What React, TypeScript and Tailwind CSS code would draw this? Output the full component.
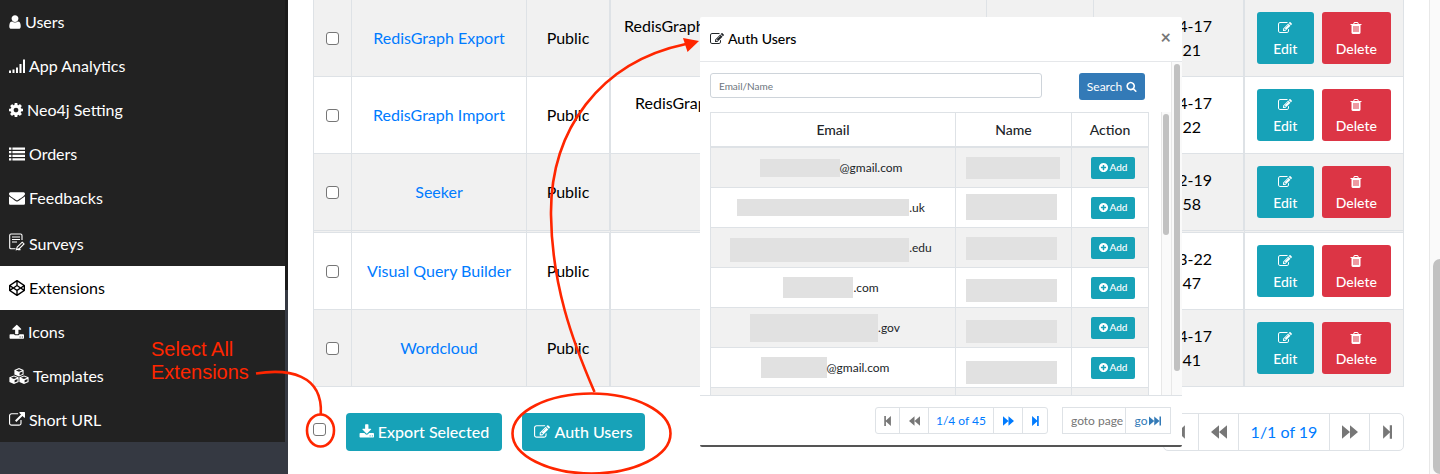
import React from "react";
import { FaCodepen } from "react-icons/fa";

const PATHS = {
  user: "M1536 1399q0 109-62.5 187t-150.5 78h-854q-88 0-150.5-78t-62.5-187q0-85 8.5-160.5t31.5-152 58.5-131 94-89 134.5-34.5q131 128 313 128t313-128q76 0 134.5 34.5t94 89 58.5 131 31.5 152 8.5 160.5zm-256-887q0 159-112.5 271.5t-271.5 112.5-271.5-112.5-112.5-271.5 112.5-271.5 271.5-112.5 271.5 112.5 112.5 271.5z",
  edit: "M888 1184l116-116-152-152-116 116v56h96v96h56zm440-720q-16-16-33 1l-350 350q-17 17-1 33t33-1l350-350q17-17 1-33zm80 594v190q0 119-84.5 203.5t-203.5 84.5h-832q-119 0-203.5-84.5t-84.5-203.5v-832q0-119 84.5-203.5t203.5-84.5h832q63 0 117 25 15 7 18 23 3 17-9 29l-49 49q-14 14-32 8-23-6-45-6h-832q-66 0-113 47t-47 113v832q0 66 47 113t113 47h832q66 0 113-47t47-113v-126q0-13 9-22l64-64q15-15 35-7t20 29zm-96-738l288 288-672 672h-288v-288zm444 132l-92 92-288-288 92-92q28-28 68-28t68 28l152 152q28 28 28 68t-28 68z",
  trash: "M704 1376v-704q0-14-9-23t-23-9h-64q-14 0-23 9t-9 23v704q0 14 9 23t23 9h64q14 0 23-9t9-23zm256 0v-704q0-14-9-23t-23-9h-64q-14 0-23 9t-9 23v704q0 14 9 23t23 9h64q14 0 23-9t9-23zm256 0v-704q0-14-9-23t-23-9h-64q-14 0-23 9t-9 23v704q0 14 9 23t23 9h64q14 0 23-9t9-23zm-544-992h448l-48-117q-7-9-17-11h-317q-10 2-17 11zm928 32v64q0 14-9 23t-23 9h-96v948q0 83-47 143.5t-113 60.5h-832q-66 0-113-58.5t-47-141.5v-952h-96q-14 0-23-9t-9-23v-64q0-14 9-23t23-9h309l70-167q15-37 54-63t79-26h320q40 0 79 26t54 63l70 167h309q14 0 23 9t9 23z",
  cog: "M1152 896q0-106-75-181t-181-75-181 75-75 181 75 181 181 75 181-75 75-181zm512-109v222q0 12-8 23t-20 13l-185 28q-19 54-39 91 35 50 107 138 10 12 10 25t-9 23q-27 37-99 108t-94 71q-12 0-26-9l-138-108q-44 23-91 38-16 136-29 186-7 28-36 28h-222q-14 0-24.5-8.5t-11.5-21.5l-28-184q-49-16-90-37l-141 107q-10 9-25 9-14 0-25-11-126-114-165-168-7-10-7-23 0-12 8-23 15-21 51-66.5t54-70.5q-27-50-41-99l-183-27q-13-2-21-12.5t-8-23.5v-222q0-12 8-23t19-13l186-28q14-46 39-92-40-57-107-138-10-12-10-24 0-10 9-23 26-36 98.5-107.5t94.5-71.5q13 0 26 10l138 107q44-23 91-38 16-136 29-186 7-28 36-28h222q14 0 24.5 8.5t11.5 21.5l28 184q49 16 90 37l142-107q9-9 24-9 13 0 25 10 129 119 165 170 7 8 7 22 0 12-8 23-15 21-51 66.5t-54 70.5q26 50 41 98l183 28q13 2 21 12.5t8 23.5z",
  download: "M1344 1344q0-26-19-45t-45-19-45 19-19 45 19 45 45 19 45-19 19-45zm256 0q0-26-19-45t-45-19-45 19-19 45 19 45 45 19 45-19 19-45zm128-224v320q0 40-28 68t-68 28h-1472q-40 0-68-28t-28-68v-320q0-40 28-68t68-28h465l135 136q58 56 136 56t136-56l136-136h464q40 0 68 28t28 68zm-325-569q17 41-14 70l-448 448q-18 19-45 19t-45-19l-448-448q-31-29-14-70 17-39 59-39h256v-448q0-26 19-45t45-19h256q26 0 45 19t19 45v448h256q42 0 59 39z",
  upload: "M1344 1472q0-26-19-45t-45-19-45 19-19 45 19 45 45 19 45-19 19-45zm256 0q0-26-19-45t-45-19-45 19-19 45 19 45 45 19 45-19 19-45zm128-224v320q0 40-28 68t-68 28h-1472q-40 0-68-28t-28-68v-320q0-40 28-68t68-28h427q21 56 70.5 92t110.5 36h256q61 0 110.5-36t70.5-92h427q40 0 68 28t28 68zm-325-648q-17 40-59 40h-256v448q0 26-19 45t-45 19h-256q-26 0-45-19t-19-45v-448h-256q-42 0-59-40-17-39 14-69l448-448q18-19 45-19t45 19l448 448q31 30 14 69z",
  link: "M1408 928v320q0 119-84.5 203.5t-203.5 84.5h-832q-119 0-203.5-84.5t-84.5-203.5v-832q0-119 84.5-203.5t203.5-84.5h704q14 0 23 9t9 23v64q0 14-9 23t-23 9h-704q-66 0-113 47t-47 113v832q0 66 47 113t113 47h832q66 0 113-47t47-113v-320q0-14 9-23t23-9h64q14 0 23 9t9 23zm384-864v512q0 26-19 45t-45 19-45-19l-176-176-652 652q-10 10-23 10t-23-10l-114-114q-10-10-10-23t10-23l652-652-176-176q-19-19-19-45t19-45 45-19h512q26 0 45 19t19 45z",
  search: "M1216 832q0-185-131.5-316.5t-316.5-131.5-316.5 131.5-131.5 316.5 131.5 316.5 316.5 131.5 316.5-131.5 131.5-316.5zm512 832q0 52-38 90t-90 38q-54 0-90-38l-343-342q-179 124-399 124-143 0-273.5-55.5t-225-150-150-225-55.5-273.5 55.5-273.5 150-225 225-150 273.5-55.5 273.5 55.5 225 150 150 225 55.5 273.5q0 220-124 399l343 343q37 37 37 90z",
  plus: "M1344 960v-128q0-26-19-45t-45-19h-256v-256q0-26-19-45t-45-19h-128q-26 0-45 19t-19 45v256h-256q-26 0-45 19t-19 45v128q0 26 19 45t45 19h256v256q0 26 19 45t45 19h128q26 0 45-19t19-45v-256h256q26 0 45-19t19-45zm320-64q0 209-103 385.5t-279.5 279.5-385.5 103-385.5-103-279.5-279.5-103-385.5 103-385.5 279.5-279.5 385.5-103 385.5 103 279.5 279.5 103 385.5z",
  envelope: "M1792 710v794q0 66-47 113t-113 47h-1472q-66 0-113-47t-47-113v-794q44 49 101 87 362 246 497 345 57 42 92.5 65.5t94.5 48 110 24.5h2q51 0 110-24.5t94.5-48 92.5-65.5q170-123 498-345 57-39 100-87zm0-294q0 79-49 151t-122 123q-376 261-468 325-10 7-42.5 30.5t-54 38-52 32.5-57.5 27-50 9h-2q-23 0-50-9t-57.5-27-52-32.5-54-38-42.5-30.5q-91-64-262-182.5t-205-142.5q-62-42-117-115.5t-55-136.5q0-78 41.5-130t118.5-52h1472q65 0 112.5 47t47.5 113z",
};

function Icon({ name, className, box = "0 0 1792 1792" }: { name: keyof typeof PATHS; className: string; box?: string }) {
  return (
    <svg viewBox={box} className={className} fill="currentColor" aria-hidden="true">
      <path d={PATHS[name]} />
    </svg>
  );
}

const SignalIcon = () => (
  <svg viewBox="0 0 16 16" className="h-4 w-4" fill="currentColor" aria-hidden="true">
    <path d="M0 12.5h2V15H0zM3.5 11.5h2V15h-2zM7 9.5h2V15H7zM10.5 6h2v9h-2zM14 1.5h2V15h-2z" />
  </svg>
);

const ListIcon = () => (
  <svg viewBox="0 0 16 16" className="h-4 w-4" fill="currentColor" aria-hidden="true">
    <path d="M0 1.5h2.4v2.2H0zM3.4 1.5H16v2.2H3.4zM0 5.1h2.4v2.2H0zM3.4 5.1H16v2.2H3.4zM0 8.7h2.4v2.2H0zM3.4 8.7H16v2.2H3.4zM0 12.3h2.4v2.2H0zM3.4 12.3H16v2.2H3.4z" />
  </svg>
);

const SurveyIcon = () => (
  <svg viewBox="0 0 16 18" className="mb-1 h-[18px] w-4" fill="none" stroke="currentColor" strokeWidth="1.1" aria-hidden="true">
    <path d="M13 7V2.4Q13 1 11.6 1H2Q.7 1 .7 2.4v12q0 1.3 1.3 1.3h4.6M3 4h8M3 6.5h8M3 9h5" />
    <path d="M13.2 9.2l1.8 1.7-5 5-2.6.7.8-2.5zM9 16.6h2.5" />
  </svg>
);

const CubesIcon = () => (
  <svg viewBox="0 0 20 16" className="h-4 w-5" aria-hidden="true">
    {["translate(5 0)", "translate(0 7.4)", "translate(10 7.4)"].map((t) => (
      <g key={t} transform={t}>
        <path d="M5 0l4.6 1.9v4.6L5 8.6.4 6.500V1.900z" fill="currentColor" />
        <path d="M1.900 2.400L5 1.200l3.100 1.200L5 3.700zM5.600 4.800l2.900-1.200v2.300L5.600 7.200z" fill="#222" />
      </g>
    ))}
  </svg>
);

const ARROWS = {
  first: { box: "0 0 9 12", d: "M0 0h2v5.500L8 0v12L2 6.500V12H0z" },
  prev: { box: "0 0 14 12", d: "M7 0v12L0 6zM14 0v12L7 6z" },
  next: { box: "0 0 14 12", d: "M0 0l7 6-7 6zM7 0l7 6-7 6z" },
  last: { box: "-1 0 9 12", d: "M8 0H6v5.500L0 0v12l6-5.500V12h2z" },
  end: { box: "0 0 16 12", d: "M0 0l7 6-7 6zM7 0l7 6-7 6zM14 0h2v12h-2z" },
};

function Arrow({ name, className }: { name: keyof typeof ARROWS; className: string }) {
  return (
    <svg viewBox={ARROWS[name].box} className={className} fill="currentColor" aria-hidden="true">
      <path d={ARROWS[name].d} />
    </svg>
  );
}

const NAV = [
  { label: "Users", icon: <Icon name="user" box="256 0 1280 1792" className="h-4 w-3" /> },
  { label: "App Analytics", icon: <SignalIcon /> },
  { label: "Neo4j Setting", icon: <Icon name="cog" box="128 128 1536 1536" className="h-3.5 w-3.5" /> },
  { label: "Orders", icon: <ListIcon /> },
  { label: "Feedbacks", icon: <Icon name="envelope" className="h-4 w-4" /> },
  { label: "Surveys", icon: <SurveyIcon />, tall: true },
  { label: "Extensions", icon: <FaCodepen className="h-4 w-4" />, active: true },
  { label: "Icons", icon: <Icon name="upload" box="0 0 1728 1792" className="h-4 w-[15px]" /> },
  { label: "Templates", icon: <CubesIcon /> },
  { label: "Short URL", icon: <Icon name="link" className="h-4 w-4" /> },
];

const ROWS = [
  { name: "RedisGraph Export", info: "RedisGraph", pad: "pl-[13px]", day: "4-17", time: "21" },
  { name: "RedisGraph Import", info: "RedisGrap", pad: "pl-6", day: "4-17", time: "22" },
  { name: "Seeker", info: "", pad: "", day: "2-19", time: "58" },
  { name: "Visual Query Builder", info: "", pad: "", day: "3-22", time: "47" },
  { name: "Wordcloud", info: "", pad: "", day: "4-17", time: "41" },
];

const USERS = [
  { tail: "@gmail.com", bar: "w-20 h-[18px]", name: "mt-[9px] h-[22px] w-[94px]", pad: "pr-1" },
  { tail: ".uk", bar: "w-[172px] h-[17px]", name: "mt-[6px] h-[26px] w-[91px]", pad: "pr-1" },
  { tail: ".edu", bar: "w-[179px] h-6 mt-1", name: "mt-[9px] h-[23px] w-[91px]", pad: "pr-1" },
  { tail: ".com", bar: "w-[70px] h-[21px]", name: "mt-[11px] h-[23px] w-[91px]", pad: "pr-1" },
  { tail: ".gov", bar: "w-32 h-7", name: "mt-[12px] h-[23px] w-[91px]", pad: "pr-4" },
  { tail: "@gmail.com", bar: "w-[66px] h-[21px]", name: "mt-[13px] h-[23px] w-[91px]", pad: "pr-4" },
  { tail: "", bar: "w-20 h-[18px]", name: "mt-[13px] h-[23px] w-[91px]", pad: "pr-1" },
];

const CHECK = "block h-[13px] w-[13px] appearance-none rounded-[3px] border border-[#767676] bg-white";
const TD = "border-r border-b border-[#dee2e6] p-0";

function Sidebar() {
  return (
    <aside className="w-72 shrink-0 bg-[linear-gradient(#1b1b1b_290px,#353942_290px)] pr-[3px]">
      <nav className="bg-[#353942]">
        <ul className="bg-[#222]">
          {NAV.map((n) => (
            <li key={n.label}>
              <a
                href="#"
                className={`flex items-center gap-1 pl-[9px] text-base ${n.tall ? "h-[46px] pt-[2px]" : "h-11"} ${
                  n.active ? "bg-white text-black" : "text-white"
                }`}
              >
                {n.icon}
                {n.label}
              </a>
            </li>
          ))}
        </ul>
      </nav>
    </aside>
  );
}

function ExtensionsTable() {
  return (
    <table className="w-full table-fixed border-separate border-spacing-0 border-l border-[#dee2e6] text-center text-base leading-6">
      <colgroup>
        <col className="w-[38px]" />
        <col className="w-[175px]" />
        <col className="w-[84px]" />
        <col />
        <col className="w-[107px]" />
        <col className="w-[151px]" />
        <col className="w-[159px]" />
      </colgroup>
      <tbody>
        {ROWS.map((r, i) => {
          const td = `${TD} ${i === 2 ? "border-b-3 [border-bottom-style:double]" : ""}`;
          return (
            <tr key={r.name} className={i % 2 ? "bg-white" : "bg-[#f1f1f1]"}>
              <td className={td}>
                <input type="checkbox" aria-label={`Select ${r.name}`} className={`${CHECK} mx-auto`} />
              </td>
              <td className={td}>
                <a href="#" className="text-[#007bff]">{r.name}</a>
              </td>
              <td className={`${td} border-r-2`}>Public</td>
              <td className={`${td} text-left align-top`}>
                <div className={`pt-[14px] ${r.pad}`}>{r.info}</div>
              </td>
              <td className={td} />
              <td className={`${td} border-r-2 text-right`}>
                <div className="pr-[31px]">{r.day}</div>
                <div className="pr-[42px]">{r.time}</div>
              </td>
              <td className={td}>
                <div className="flex gap-2 px-3 py-3 text-sm leading-[21px] font-medium text-white">
                  <button className="flex h-[52px] w-[57px] flex-col items-center justify-center rounded-[3px] bg-[#17a2b8]">
                    <span className="flex h-[21px] items-center">
                      <Icon name="edit" className="h-3.5 w-3.5" />
                    </span>
                    Edit
                  </button>
                  <button className="flex h-[52px] w-[70px] flex-col items-center justify-center rounded-[3px] bg-[#dc3545]">
                    <span className="flex h-[21px] items-center">
                      <Icon name="trash" className="h-3.5 w-3.5" />
                    </span>
                    Delete
                  </button>
                </div>
              </td>
            </tr>
          );
        })}
      </tbody>
    </table>
  );
}

function Footer() {
  const btn = "flex h-[38px] items-center justify-center rounded-[4px] bg-[#17a2b8] text-base font-medium text-white gap-1";
  const pg = "flex items-center justify-center text-[#777]";
  return (
    <div className="mt-[26px] flex">
      <input type="checkbox" aria-label="Select all extensions" className={`${CHECK} mt-[10px]`} />
      <button className={`${btn} ml-5 w-[156px]`}>
        <Icon name="download" box="0 0 1728 1792" className="h-4 w-[15px]" />
        Export Selected
      </button>
      <button className={`${btn} ml-5 w-[123px]`}>
        <Icon name="edit" className="h-4 w-4" />
        Auth Users
      </button>
      <div className="ml-auto flex h-[38px] divide-x divide-[#dee2e6] rounded-[5px] border border-[#dee2e6] bg-white">
        <button aria-label="First page" className={`${pg} w-[35px]`}><Arrow name="first" className="h-3.5 w-2.5" /></button>
        <button aria-label="Previous page" className={`${pg} w-10`}><Arrow name="prev" className="h-3.5 w-4" /></button>
        <button className="w-[91px] text-base text-[#007bff]">1/1 of 19</button>
        <button aria-label="Next page" className={`${pg} w-10`}><Arrow name="next" className="h-3.5 w-4" /></button>
        <button aria-label="Last page" className={`${pg} w-[33px]`}><Arrow name="last" className="h-3.5 w-2.5" /></button>
      </div>
    </div>
  );
}

function AuthUsersDialog() {
  const cell = "border-r border-b border-[#dee2e6] p-0";
  const head = "border-r border-t border-b-2 border-[#dee2e6] p-0 font-medium";
  const pg = "flex items-center justify-center";
  return (
    <section
      role="dialog"
      aria-label="Auth Users"
      className="absolute top-[17px] left-[700px] z-10 flex h-[430px] w-[482px] flex-col overflow-hidden rounded-[2px] border-b-2 border-[#555] bg-white text-[#212529]"
    >
      <header className="flex h-[45px] shrink-0 items-center border-b border-[#e5e7ea] pr-[11px] pl-[10px]">
        <Icon name="edit" className="mr-1 h-3.5 w-3.5" />
        <h2 className="text-sm font-medium text-black">Auth Users</h2>
        <button aria-label="Close" className="ml-auto pb-1 text-lg font-bold text-[#777]">×</button>
      </header>
      <div className="flex min-h-0 flex-1 border-b border-[#dee2e6]">
        <div className="flex min-w-0 flex-1 flex-col pl-[10px]">
          <div className="flex pt-[11px]">
            <input
              aria-label="Email or name"
              placeholder="Email/Name"
              className="h-[25px] w-[332px] rounded-[3px] border border-[#ced4da] px-2 text-[10px] placeholder:text-[#6c757d]"
            />
            <button className="ml-[37px] flex h-[27px] w-[66px] items-center justify-center gap-1 rounded-[3px] bg-[#337ab7] text-xs text-white">
              Search
              <Icon name="search" className="h-[11px] w-[11px]" />
            </button>
          </div>
          <div className="mt-3 flex min-h-0 flex-1 overflow-hidden">
            <div className="min-w-0 flex-1 pr-3">
              <table className="w-full table-fixed border-separate border-spacing-0 border-l border-[#dee2e6] text-center text-xs">
                <colgroup>
                  <col />
                  <col className="w-[116px]" />
                  <col className="w-[77px]" />
                </colgroup>
                <thead>
                  <tr className="h-9 text-sm">
                    <th className={head}>Email</th>
                    <th className={head}>Name</th>
                    <th className={head}>Action</th>
                  </tr>
                </thead>
                <tbody>
                  {USERS.map((u, i) => (
                    <tr key={i} className={`h-10 ${i % 2 ? "bg-white" : "bg-[#f1f1f1]"}`}>
                      <td className={cell}>
                        <div className={`flex items-center justify-center ${u.pad}`}>
                          <span className={`bg-[#e1e1e1] ${u.bar}`} />
                          {u.tail}
                        </div>
                      </td>
                      <td className={`${cell} align-top`}>
                        <div className={`ml-[10px] bg-[#e1e1e1] ${u.name}`} />
                      </td>
                      <td className={`${cell} pl-[6px]`}>
                        <button className="mx-auto flex h-[22px] w-11 items-center justify-center gap-[2px] rounded-[2px] bg-[#17a2b8] text-[10px] font-medium text-white">
                          <Icon name="plus" box="128 128 1536 1536" className="h-[9px] w-[9px]" />
                          Add
                        </button>
                      </td>
                    </tr>
                  ))}
                </tbody>
              </table>
            </div>
            <div className="w-[10px] border-l border-[#e8e8e8] bg-[#fafafa] pt-[2px] pl-px">
              <div className="h-[121px] w-[6px] rounded-full bg-[#c1c1c1]" />
            </div>
          </div>
        </div>
        <div className="w-[11px] border-l border-[#e8e8e8] bg-[#fafafa] pt-[2px] pl-[2px]">
          <div className="h-[307px] w-[6px] rounded-full bg-[#c1c1c1]" />
        </div>
      </div>
      <footer className="flex h-[49px] shrink-0 justify-end gap-[14px] pt-[11px] pr-[11px] text-xs text-[#007bff]">
        <div className="flex h-[27px] divide-x divide-[#dee2e6] rounded-[3px] border border-[#dee2e6]">
          <button aria-label="First page" className={`${pg} w-6 text-[#777]`}><Arrow name="first" className="h-[10px] w-2" /></button>
          <button aria-label="Previous page" className={`${pg} w-[29px] text-[#777]`}><Arrow name="prev" className="h-[10px] w-[11px]" /></button>
          <button className="w-[65px]">1/4 of 45</button>
          <button aria-label="Next page" className={`${pg} w-[29px]`}><Arrow name="next" className="h-[10px] w-[11px]" /></button>
          <button aria-label="Last page" className={`${pg} w-6`}><Arrow name="last" className="h-[10px] w-2" /></button>
        </div>
        <div className="flex h-[27px] border border-[#dee2e6]">
          <input aria-label="Page number" placeholder="goto page" className="w-[63px] border-r border-[#dee2e6] pr-px pl-2 text-xs placeholder:text-[#757575]" />
          <button className={`${pg} w-[44px] gap-[2px] text-xs text-[#337ab7]`}>
            go
            <Arrow name="end" className="h-[10px] w-3" />
          </button>
        </div>
      </footer>
    </section>
  );
}

function Annotations() {
  return (
    <>
      <p className="absolute top-[338px] left-[151px] z-20 font-['Liberation_Sans',Arial,sans-serif] text-xl leading-[23px] text-[#ff2600]">
        Select All
        <br />
        Extensions
      </p>
      <svg viewBox="0 0 1440 474" className="pointer-events-none absolute top-0 left-0 z-20 h-[474px] w-[1440px]" fill="none" stroke="#ff2600" strokeWidth="2.6" aria-hidden="true">
        <path d="M256 373.500C288 368.500 323 374 320.800 414" />
        <ellipse cx="320.500" cy="430.500" rx="13.500" ry="16" />
        <path d="M594.500 392C572 340 552 285 551 215C550 130 600 62 686 44" />
        <ellipse cx="591.500" cy="433.500" rx="79" ry="40" />
        <path d="M699 41L683 38l4.500 14z" fill="#ff2600" stroke="none" />
      </svg>
    </>
  );
}

export default function App() {
  return (
    <div className="relative flex min-h-screen overflow-hidden bg-white font-[Lato,'Noto_Sans',sans-serif] text-black">
      <Sidebar />
      <main className="min-w-0 flex-1 pr-[25px] pl-[25px]">
        <ExtensionsTable />
        <Footer />
      </main>
      <div className="flex w-[11px] shrink-0 flex-col border-l border-[#e8e8e8] bg-[#fafafa] pt-[259px] pl-[3px]">
        <div className="flex-1 rounded-l-full rounded-r-sm bg-[#c1c1c1]" />
      </div>
      <AuthUsersDialog />
      <Annotations />
    </div>
  );
}
